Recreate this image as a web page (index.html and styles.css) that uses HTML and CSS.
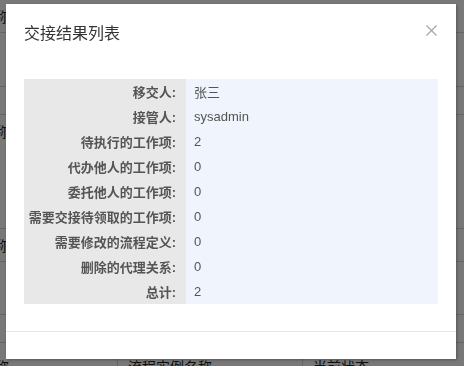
FILE: index.html
```html
<!DOCTYPE html>
<html lang="zh-CN">
<head>
<meta charset="utf-8">
<title>交接结果列表</title>
<link rel="stylesheet" href="styles.css">
</head>
<body>
<div class="page">
  <div class="bg-row r1"><span class="bg-cell first">名称</span></div>
  <div class="bg-row r2"></div>
  <div class="bg-row r3"></div>
  <div class="bg-row r4 top"><span class="bg-cell first">名称</span></div>
  <div class="bg-row r5"><span class="bg-cell first">名称</span></div>
  <div class="bg-row r6"></div>
  <div class="bg-row r7"></div>
  <div class="bg-row r8 top">
    <span class="bg-cell first">名称</span>
    <span class="bg-cell mid">流程实例名称</span>
    <span class="bg-cell last">当前状态</span>
  </div>
</div>
<div class="overlay"></div>
<div class="modal">
  <div class="modal-header">
    <span class="modal-title">交接结果列表</span>
    <span class="modal-close" aria-label="关闭">
      <svg width="11" height="11" viewBox="0 0 11 11"><path d="M0.5 0.5 L10.5 10.5 M10.5 0.5 L0.5 10.5" stroke="#a0a4ad" stroke-width="1.1" fill="none"/></svg>
    </span>
  </div>
  <div class="modal-body">
    <div class="result-table">
      <div class="lbl">移交人:</div><div class="val">张三</div>
      <div class="lbl">接管人:</div><div class="val">sysadmin</div>
      <div class="lbl">待执行的工作项:</div><div class="val">2</div>
      <div class="lbl">代办他人的工作项:</div><div class="val">0</div>
      <div class="lbl">委托他人的工作项:</div><div class="val">0</div>
      <div class="lbl">需要交接待领取的工作项:</div><div class="val">0</div>
      <div class="lbl">需要修改的流程定义:</div><div class="val">0</div>
      <div class="lbl">删除的代理关系:</div><div class="val">0</div>
      <div class="lbl">总计:</div><div class="val">2</div>
    </div>
  </div>
  <div class="modal-footer"></div>
</div>
</body>
</html>
```
FILE: styles.css
```css
html, body {
  margin: 0;
  padding: 0;
  width: 464px;
  height: 366px;
  overflow: hidden;
  background: #ffffff;
  font-family: "Liberation Sans", "Noto Sans CJK SC", sans-serif;
}

.page {
  display: flex;
  flex-direction: column;
}

.bg-row {
  display: flex;
  align-items: center;
  border-bottom: 1px solid #d6d6d6;
  box-sizing: border-box;
  font-size: 14px;
  color: #222;
}
.bg-row.top { align-items: flex-start; }
.r1 { height: 33px; }
.r2 { height: 54px; }
.r3 { height: 28px; }
.r4 { height: 114px; padding-top: 6px; }
.r5 { height: 33px; }
.r6 { height: 53px; }
.r7 { height: 28px; }
.r8 { height: 40px; padding-top: 13px; border-bottom: none; }

.bg-cell.first {
  width: 117px;
  text-indent: -19px;
  white-space: nowrap;
  overflow: hidden;
}
.r8 .bg-cell { align-self: stretch; }
.bg-cell.mid {
  width: 185px;
  padding-left: 10px;
  box-sizing: border-box;
  border-left: 1px solid #d6d6d6;
  margin-top: -13px;
  padding-top: 13px;
}
.bg-cell.last {
  padding-left: 10px;
  border-left: 1px solid #d6d6d6;
  margin-top: -13px;
  padding-top: 13px;
}

.overlay {
  position: fixed;
  inset: 0;
  background: rgba(0, 0, 0, 0.53);
}

.modal {
  position: fixed;
  left: 6px;
  top: 4px;
  width: 450px;
  background: #fff;
  box-shadow: 1px 1px 3px rgba(0, 0, 0, 0.3);
  display: flex;
  flex-direction: column;
}

.modal-header {
  height: 56px;
  padding: 0 18px;
  display: flex;
  align-items: center;
  justify-content: space-between;
}
.modal-title {
  font-size: 16px;
  color: #333;
  font-family: "Noto Sans CJK SC", sans-serif;
}
.modal-close {
  display: flex;
  width: 11px;
  height: 11px;
  margin-right: 1px;
  margin-top: -4px;
}

.modal-body {
  padding: 19px 18px 27px;
}

.result-table {
  display: grid;
  grid-template-columns: 162px 1fr;
  grid-auto-rows: 25px;
  font-size: 13px;
  color: #555;
}
.lbl {
  background: #e8e8e8;
  text-align: right;
  padding-right: 10px;
  font-weight: bold;
  display: flex;
  align-items: center;
  justify-content: flex-end;
  color: #555;
}
.val {
  background: #f0f4fc;
  padding-left: 8px;
  display: flex;
  align-items: center;
  color: #555;
}

.modal-footer {
  height: 27px;
  border-top: 1px solid #e6e6e6;
}
```
